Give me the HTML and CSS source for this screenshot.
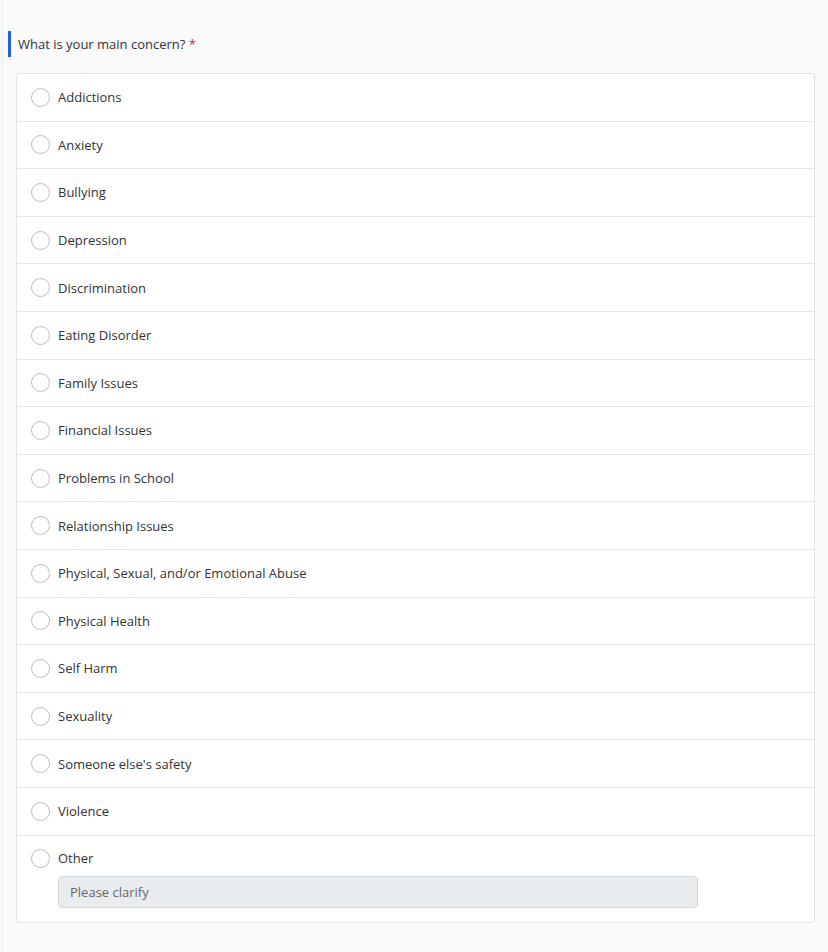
FILE: index.html
```html
<!DOCTYPE html>
<html>
	<head>
		<meta charset="UTF-8">
		<title>Main concern</title>
		<link rel="stylesheet" href="styles.css">
	</head>
	<body>
		<div class="page">
			<div class="question">
				<div class="qlabel">What is your main concern? <span class="req">*</span></div>
				<div class="options">
					<label class="opt"><span class="radio"></span>Addictions</label>
					<label class="opt"><span class="radio"></span>Anxiety</label>
					<label class="opt"><span class="radio"></span>Bullying</label>
					<label class="opt"><span class="radio"></span>Depression</label>
					<label class="opt"><span class="radio"></span>Discrimination</label>
					<label class="opt"><span class="radio"></span>Eating Disorder</label>
					<label class="opt"><span class="radio"></span>Family Issues</label>
					<label class="opt"><span class="radio"></span>Financial Issues</label>
					<label class="opt"><span class="radio"></span>Problems in School</label>
					<label class="opt"><span class="radio"></span>Relationship Issues</label>
					<label class="opt"><span class="radio"></span>Physical, Sexual, and/or Emotional Abuse</label>
					<label class="opt"><span class="radio"></span>Physical Health</label>
					<label class="opt"><span class="radio"></span>Self Harm</label>
					<label class="opt"><span class="radio"></span>Sexuality</label>
					<label class="opt"><span class="radio"></span>Someone else's safety</label>
					<label class="opt"><span class="radio"></span>Violence</label>
					<div class="opt other">
						<label class="otherline"><span class="radio"></span>Other</label>
						<div class="clarify">Please clarify</div>
					</div>
				</div>
			</div>
		</div>
	</body>
</html>
```
FILE: styles.css
```css
html,body{margin:0;padding:0;background:#fafafa;}
body{font-family:"Open Sans","Noto Sans",sans-serif;color:#333;font-size:13px;}
.page{margin-left:2px;border-left:1px solid #e3f1f0;min-height:952px;padding:31px 13px 0 13px;box-sizing:border-box;}
.qlabel{border-left:3px solid #1f63d6;margin-left:-8px;padding-left:7px;height:26px;line-height:26px;font-size:13px;}
.req{color:#d9202a;}
.options{margin-top:16px;background:#fff;border:1px solid #e3e3e3;border-radius:3px;}
.opt{display:flex;align-items:center;height:47.6px;box-sizing:border-box;border-bottom:1px solid #e6e6e6;padding-left:14px;font-size:13px;}
.opt:last-child{border-bottom:none;}
.radio{width:19px;height:19px;border:1.5px solid #bdbdbd;border-radius:50%;box-sizing:border-box;margin-right:8px;background:#fff;}
.other{display:block;height:auto;padding-top:13px;padding-bottom:14px;}
.otherline{display:flex;align-items:center;height:19px;}
.clarify{margin:8px 0 0 27px;width:640px;height:32px;box-sizing:border-box;background:#e9ecef;border:1px solid #d3d8dd;border-radius:4px;color:#666;line-height:30px;padding-left:11px;}
```
